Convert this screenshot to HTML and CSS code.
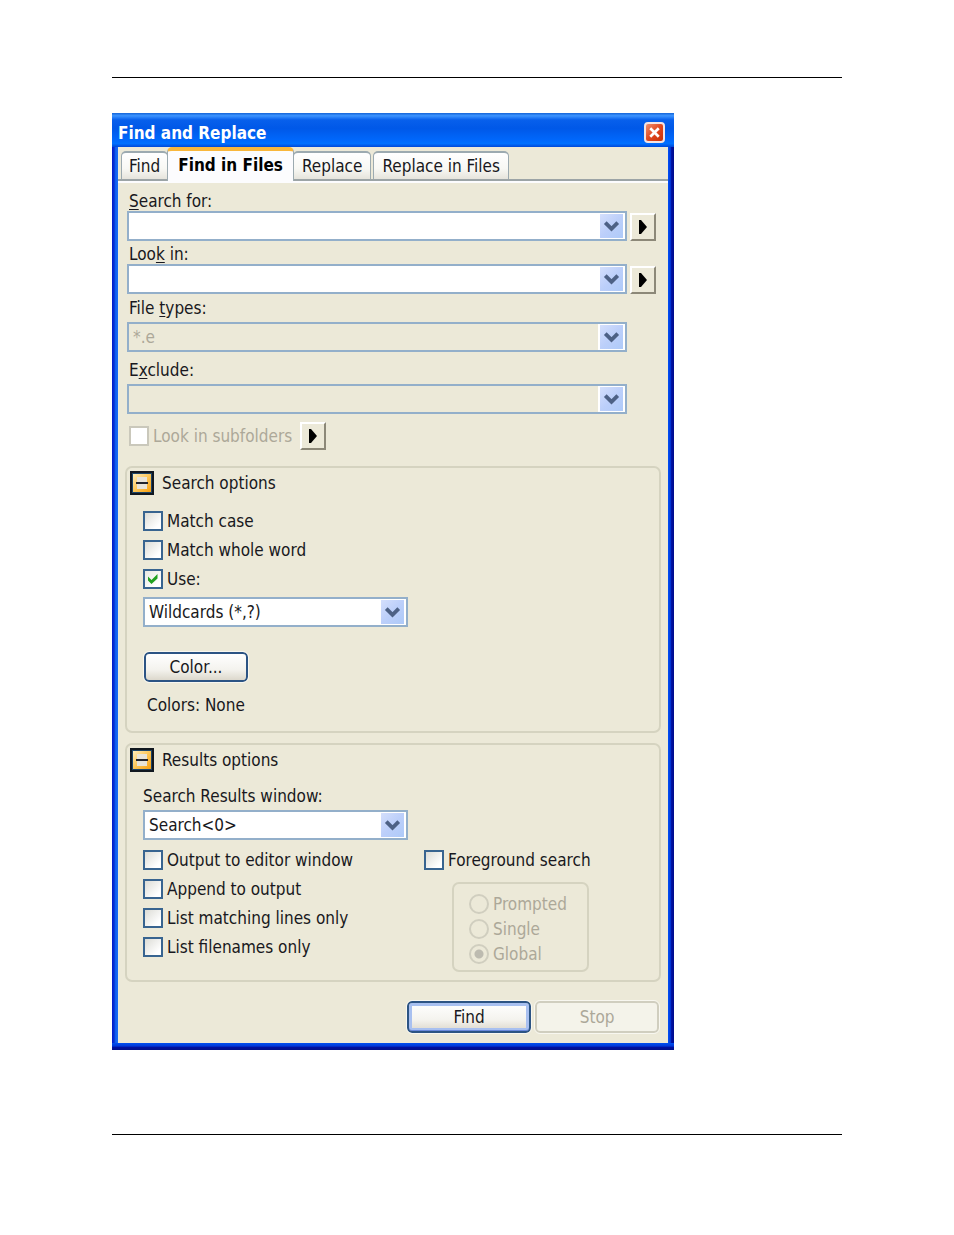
FILE: index.html
```html
<!DOCTYPE html>
<html lang="en">
<head>
<meta charset="utf-8">
<title>Find and Replace</title>
<link rel="stylesheet" href="styles.css">
</head>
<body>
<svg class="defs" aria-hidden="true">
  <defs>
    <linearGradient id="amber" x1="0" y1="0" x2="1" y2="1">
      <stop offset="0" stop-color="#ffeebc"/><stop offset="0.500" stop-color="#fcc658"/><stop offset="1" stop-color="#f8a010"/>
    </linearGradient>
    <symbol id="chevron" viewBox="0 0 24 24"><path d="M5.500 8.500l6.500 6.500 6.500-6.500" fill="none" stroke="#4d6185" stroke-width="4"/></symbol>
    <symbol id="play" viewBox="0 0 22 24"><path d="M7 5h2l6 7-6 7H7z" fill="#000"/></symbol>
    <symbol id="collapse" viewBox="0 0 24 24">
      <rect width="24" height="24" fill="#111820"/>
      <rect x="2" y="2" width="20" height="20" fill="#1c4468"/>
      <rect x="3" y="3" width="18" height="18" fill="url(#amber)"/>
      <rect x="7" y="6" width="10" height="12" fill="#e8e4d8"/>
      <rect x="6" y="11" width="12" height="2" fill="#22242c"/>
    </symbol>
  </defs>
</svg>
<main class="page">
  <section class="dialog">
    <header class="titlebar">
      <h1 class="title">Find and Replace</h1>
      <button class="close" type="button" aria-label="Close">
        <svg viewBox="0 0 20 20"><path d="M5 5l10 10M15 5L5 15" stroke="#fff" stroke-width="3.200"/></svg>
      </button>
    </header>
    <div class="client">
      <nav class="tabs" role="tablist">
        <button class="tab" type="button" role="tab">Find</button>
        <button class="tab tab-active" type="button" role="tab" aria-selected="true">Find in Files</button>
        <button class="tab" type="button" role="tab">Replace</button>
        <button class="tab tab-last" type="button" role="tab">Replace in Files</button>
      </nav>
      <form class="panel">
        <div class="fields">
          <div class="field">
            <label for="search"><u>S</u>earch for:</label>
            <div class="line">
              <div class="combo"><input id="search" type="text"><button class="drop" type="button" aria-label="Search history"><svg><use href="#chevron"/></svg></button></div>
              <button class="menu" type="button" aria-label="Search menu"><svg><use href="#play"/></svg></button>
            </div>
          </div>
          <div class="field tight">
            <label for="lookin">Loo<u>k</u> in:</label>
            <div class="line">
              <div class="combo"><input id="lookin" type="text"><button class="drop" type="button" aria-label="Look in history"><svg><use href="#chevron"/></svg></button></div>
              <button class="menu" type="button" aria-label="Look in menu"><svg><use href="#play"/></svg></button>
            </div>
          </div>
          <div class="field short types">
            <label for="types">File <u>t</u>ypes:</label>
            <div class="combo off"><input id="types" type="text" value="*.e" disabled><button class="drop" type="button" aria-label="File type list"><svg><use href="#chevron"/></svg></button></div>
          </div>
          <div class="field short exclude">
            <label for="exclude">E<u>x</u>clude:</label>
            <div class="combo off"><input id="exclude" type="text" disabled><button class="drop" type="button" aria-label="Exclude list"><svg><use href="#chevron"/></svg></button></div>
          </div>
          <div class="subfolders">
            <label class="check muted"><input type="checkbox" disabled>Look in subfolders</label>
            <button class="menu" type="button" aria-label="Subfolder menu"><svg><use href="#play"/></svg></button>
          </div>
        </div>

        <section class="group search-group">
          <div class="group-head">
            <button class="toggle" type="button" aria-label="Collapse search options"><svg><use href="#collapse"/></svg></button>
            <h2>Search options</h2>
          </div>
          <div class="group-body">
            <div class="checks">
              <label class="check"><input type="checkbox">Match case</label>
              <label class="check"><input type="checkbox">Match whole word</label>
              <label class="check"><input type="checkbox" checked>Use:</label>
            </div>
            <div class="picker">
              <select aria-label="Search syntax"><option>Wildcards (*,?)</option></select>
              <span class="drop"><svg><use href="#chevron"/></svg></span>
            </div>
            <button class="push color" type="button">Color...</button>
            <p class="note">Colors: None</p>
          </div>
        </section>

        <section class="group results-group">
          <div class="group-head">
            <button class="toggle" type="button" aria-label="Collapse results options"><svg><use href="#collapse"/></svg></button>
            <h2>Results options</h2>
          </div>
          <div class="group-body">
            <label class="results-label" for="results">Search Results window:</label>
            <div class="picker">
              <select id="results"><option>Search&lt;0&gt;</option></select>
              <span class="drop"><svg><use href="#chevron"/></svg></span>
            </div>
            <div class="columns">
              <div class="checks">
                <label class="check"><input type="checkbox">Output to editor window</label>
                <label class="check"><input type="checkbox">Append to output</label>
                <label class="check"><input type="checkbox">List matching lines only</label>
                <label class="check"><input type="checkbox">List filenames only</label>
              </div>
              <div class="foreground">
                <label class="check"><input type="checkbox">Foreground search</label>
                <div class="radios" role="radiogroup" aria-label="Replace mode">
                  <label class="radio"><input type="radio" name="mode" disabled>Prompted</label>
                  <label class="radio"><input type="radio" name="mode" disabled>Single</label>
                  <label class="radio"><input type="radio" name="mode" disabled checked>Global</label>
                </div>
              </div>
            </div>
          </div>
        </section>

        <footer class="actions">
          <button class="push primary" type="button">Find</button>
          <button class="push" type="button" disabled>Stop</button>
        </footer>
      </form>
    </div>
  </section>
</main>
</body>
</html>
```

FILE: styles.css
```css
* { box-sizing: border-box; }

body {
  margin: 0;
  background: #fff;
  color: #181820;
  font: 17px/20px "DejaVu Sans Condensed", "Noto Sans", sans-serif;
}

h1, h2, p { margin: 0; font-size: inherit; font-weight: normal; }
button, input, select { font: inherit; color: inherit; margin: 0; padding: 0; }
svg { display: block; width: 100%; height: 100%; }
.defs { position: absolute; width: 0; height: 0; }

.page {
  margin: 77px 112px 0;
  padding: 35px 0 84px;
  border-top: 1px solid #000;
  border-bottom: 1px solid #000;
}

/* Window frame */
.dialog {
  width: 77%;
  min-width: 560px;
  padding: 0 6px 7px;
  background:
    linear-gradient(#0050f0, #0038d8 45%, #0010a0 60%, #00108a) bottom / 100% 7px no-repeat,
    linear-gradient(90deg, #0018c8, #0838d8 40%, #1060f0 60%, #1a6cf4) left / 6px 100% no-repeat,
    linear-gradient(90deg, #0050f8, #0038d8 40%, #0010a0 60%, #000c8c) right / 6px 100% no-repeat;
}

.titlebar {
  display: flex;
  align-items: center;
  justify-content: space-between;
  height: 34px;
  margin: 0 -6px;
  padding: 5px 9px 0 6px;
  background: linear-gradient(#1464d8, #3c94ff 8%, #0860ec 20%, #0058e8 45%, #0068fc 80%, #0070ff 90%, #0048d8);
}

.title {
  color: #fff;
  font-size: 17px;
  font-weight: bold;
}

.close {
  width: 21px;
  height: 21px;
  border: 2px solid #f4e4e4;
  border-radius: 4px;
  background: linear-gradient(135deg, #f09070, #e04820 50%, #c83008);
}

.client { background: #ece9d8; }

/* Tabs */
.tabs {
  display: flex;
  align-items: flex-end;
  height: 32px;
  padding-left: 3px;
}

.tab {
  height: 28px;
  padding: 0 7px;
  border: 2px solid #9caab0;
  border-width: 2px 1px 0;
  border-radius: 5px 5px 0 0;
  background: linear-gradient(#fff, #f8f8f4 60%, #e6e4dc);
  white-space: nowrap;
}

.tab-active {
  height: 34px;
  margin: 0 -1px -2px;
  padding: 0 10px 2px;
  border-top: 4px solid #f9b73c;
  background: #fcfcfe;
  color: #000;
  font-weight: bold;
  z-index: 1;
}

.tab-active ~ .tab { padding: 0 8px; }
.tab-last { margin-left: 2px; }

.panel {
  padding: 8px 7px 10px;
  border-top: 2px solid #9ca4a6;
  background: linear-gradient(#fcfcfe, #fcfcfe) top / 100% 2px no-repeat;
}

/* Search fields */
.fields { padding: 2px 5px 0 2px; }
.field label { display: block; padding-left: 2px; }
.tight { margin-top: 3px; }
.types { margin-top: 4px; }
.exclude { margin-top: 8px; }
.short { margin-right: 29px; }
.short label { margin-bottom: 4px; }
.line { display: flex; align-items: flex-end; gap: 3px; }

u { text-underline-offset: 2px; }

.combo {
  display: flex;
  flex: 1;
  height: 30px;
  border: 2px solid #93afca;
  background: #fff;
}

.combo input {
  flex: 1;
  min-width: 0;
  padding: 0 4px;
  border: 0;
  background: none;
  outline: 0;
}

.off { background: #ece9d8; }
.off input { color: #aca899; }

.drop {
  width: 27px;
  height: 26px;
  border: 1px solid #fff;
  border-width: 1px 2px;
  background: linear-gradient(135deg, #d4dffc, #bccffa 50%, #aecaf8) padding-box, #fff;
}

.menu {
  width: 26px;
  height: 28px;
  border: 2px solid;
  border-color: #fff #8c8878 #8c8878 #fff;
  background: #ece9d8;
}

.subfolders {
  display: flex;
  align-items: center;
  gap: 8px;
  margin-top: 8px;
  padding-left: 2px;
}

/* Check boxes and radio buttons */
.check, .radio { display: flex; align-items: center; gap: 4px; white-space: nowrap; }
.muted { color: #aca899; }
.checks .check, .foreground .check { height: 29px; }

.check input {
  appearance: none;
  width: 20px;
  height: 20px;
  border: 2px solid #386490;
  background: linear-gradient(135deg, #dcdcd6, #fff 80%);
}

.check input:checked {
  background: url("data:image/svg+xml,%3Csvg xmlns='http://www.w3.org/2000/svg' viewBox='0 0 16 16'%3E%3Cpath d='M3 5.500l3.500 3.500L12.500 3v4.500L6.500 13 3 9.500z' fill='%2321a121'/%3E%3C/svg%3E"), linear-gradient(135deg, #e8e8e2, #fff 80%);
}

.check input:disabled { border-color: #cac8bb; background: #fff; }

/* Option groups */
.group {
  padding: 3px 4px;
  border: 2px solid #d5d3c0;
  border-radius: 7px;
}

.search-group { margin-top: 16px; padding-bottom: 16px; }
.results-group { margin-top: 10px; padding-bottom: 8px; }
.group-head { display: flex; align-items: center; gap: 8px; margin-left: -1px; }
.toggle { width: 24px; height: 24px; border: 0; background: none; }
.group-body { padding: 0 12px; }
.search-group .checks { margin-top: 11px; }

.picker {
  display: grid;
  width: 265px;
  height: 30px;
  margin-top: 4px;
  border: 2px solid #93afca;
  background: #fff;
}

.picker select {
  grid-area: 1 / 1;
  padding: 0 4px;
  border: 0;
  background: none;
  appearance: none;
}

.picker .drop { grid-area: 1 / 1; justify-self: end; pointer-events: none; }

.push {
  width: 124px;
  height: 32px;
  border: 2px solid #2c5484;
  border-radius: 5px;
  outline: 1px solid #f8f7f0;
  background: linear-gradient(#fff, #f4f3ee 60%, #dcd8cc);
}

.push:disabled { border-color: #d0cebf; background: #f4f3ea; color: #aca899; }
.primary { box-shadow: inset 0 -1px #6888dc, inset 0 0 0 3px #a8c0f0; }
.color { display: block; width: 104px; height: 30px; margin: 25px 0 13px 1px; }
.note { padding-left: 4px; }

.results-label { display: block; margin-top: 14px; }

.columns { display: flex; gap: 12px; margin-top: 5px; }
.columns .checks { flex: 0 0 269px; }

.radios {
  width: 137px;
  height: 90px;
  margin: 8px 0 0 28px;
  padding: 7px 15px;
  border: 2px solid #d5d3c0;
  border-radius: 7px;
}

.radio { height: 25px; color: #aca899; }

.radio input {
  appearance: none;
  width: 20px;
  height: 20px;
  border: 2px solid #d0cebf;
  border-radius: 50%;
}

.radio input:checked { background: radial-gradient(circle, #bdbbb0 4px, transparent 5px); }

.actions {
  display: flex;
  justify-content: flex-end;
  gap: 4px;
  margin-top: 19px;
  padding-right: 2px;
}
```
